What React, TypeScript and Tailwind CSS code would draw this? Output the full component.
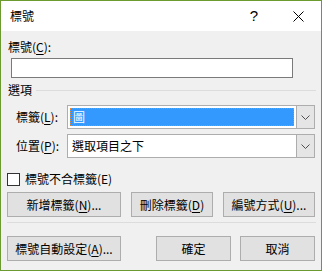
import React from "react"

const font = { fontFamily: '"Noto Sans CJK TC", "Noto Sans", sans-serif' }

function Acc({ k }: { k: string }) {
    return <span className="underline underline-offset-2 decoration-1">{k}</span>
}

function Chevron() {
    return (
        <svg width="9" height="5" viewBox="0 0 9 5" fill="none">
            <path d="M0.5 0.5 L4.5 4.5 L8.5 0.5" stroke="#505050" strokeWidth="1" />
        </svg>
    )
}

function Combo({ children, selected }: { children: React.ReactNode; selected?: boolean }) {
    return (
        <div className="flex h-[24px] w-[248px] border border-[#adadad] bg-white">
            <div className="flex flex-1 p-[2px]">
                {selected ? (
                    <div className="flex flex-1 items-center border border-dotted border-[#e8852c] bg-[#3399ff] pl-[2px] text-white">
                        {children}
                    </div>
                ) : (
                    <div className="flex flex-1 items-center pl-[2px]">{children}</div>
                )}
            </div>
            <div className="flex w-[18px] items-center justify-center border-l border-[#adadad] bg-[#e5e5e5]">
                <Chevron />
            </div>
        </div>
    )
}

function Btn({ w, children }: { w: string; children: React.ReactNode }) {
    return (
        <div className={`flex h-[25px] items-center justify-center border border-[#adadad] bg-[#e1e1e1] ${w}`}>
            {children}
        </div>
    )
}

export default function App() {
    return (
        <div
            className="flex h-[271px] w-[322px] flex-col border border-[#6a9a30] text-[12px] leading-[16px] text-black"
            style={font}
        >
            {/* Title bar */}
            <div className="flex h-[30px] items-center bg-white">
                <span className="ml-[9px] flex-1">標號</span>
                <span className="mr-[35px] text-[15px]" style={{ fontFamily: '"Liberation Sans", sans-serif' }}>?</span>
                <svg className="mr-[17px]" width="11" height="11" viewBox="0 0 11 11">
                    <path d="M0.5 0.5 L10.5 10.5 M10.5 0.5 L0.5 10.5" stroke="#000" strokeWidth="1" />
                </svg>
            </div>

            {/* Body */}
            <div className="flex flex-1 flex-col bg-[#f0f0f0]">
                <div className="ml-[7px] mt-[8px]">
                    標號(<Acc k="C" />):
                </div>
                <div className="ml-[10px] mt-[3px] h-[20px] w-[282px] border border-[#7a7a7a] bg-white" />

                <div className="mt-[4px] flex items-center pl-[7px] pr-[5px]">
                    <span>選項</span>
                    <div className="ml-[4px] h-px flex-1 bg-[#dcdcdc]" />
                </div>

                <div className="ml-[15px] mt-[7px] flex items-center">
                    <span className="w-[51px]">
                        標籤(<Acc k="L" />):
                    </span>
                    <Combo selected>圖</Combo>
                </div>
                <div className="ml-[15px] mt-[5px] flex items-center">
                    <span className="w-[51px]">
                        位置(<Acc k="P" />):
                    </span>
                    <Combo>選取項目之下</Combo>
                </div>

                <div className="ml-[6px] mt-[13px] flex items-center">
                    <div className="h-[13px] w-[13px] border border-[#333333] bg-white" />
                    <span className="ml-[5px]">標號不合標籤(E)</span>
                </div>

                <div className="ml-[6px] mt-[5px] flex gap-[10px]">
                    <Btn w="w-[114px]">
                        新增標籤(<Acc k="N" />)...
                    </Btn>
                    <Btn w="w-[82px]">
                        刪除標籤(<Acc k="D" />)
                    </Btn>
                    <Btn w="w-[92px]">
                        編號方式(<Acc k="U" />)...
                    </Btn>
                </div>

                <div className="ml-[6px] mt-[5px] h-px w-[309px] bg-[#dcdcdc]" />

                <div className="ml-[6px] mt-[13px] flex">
                    <Btn w="w-[114px]">
                        標號自動設定(<Acc k="A" />)...
                    </Btn>
                    <div className="ml-[35px]">
                        <Btn w="w-[75px]">確定</Btn>
                    </div>
                    <div className="ml-[9px]">
                        <Btn w="w-[75px]">取消</Btn>
                    </div>
                </div>
            </div>
        </div>
    )
}
